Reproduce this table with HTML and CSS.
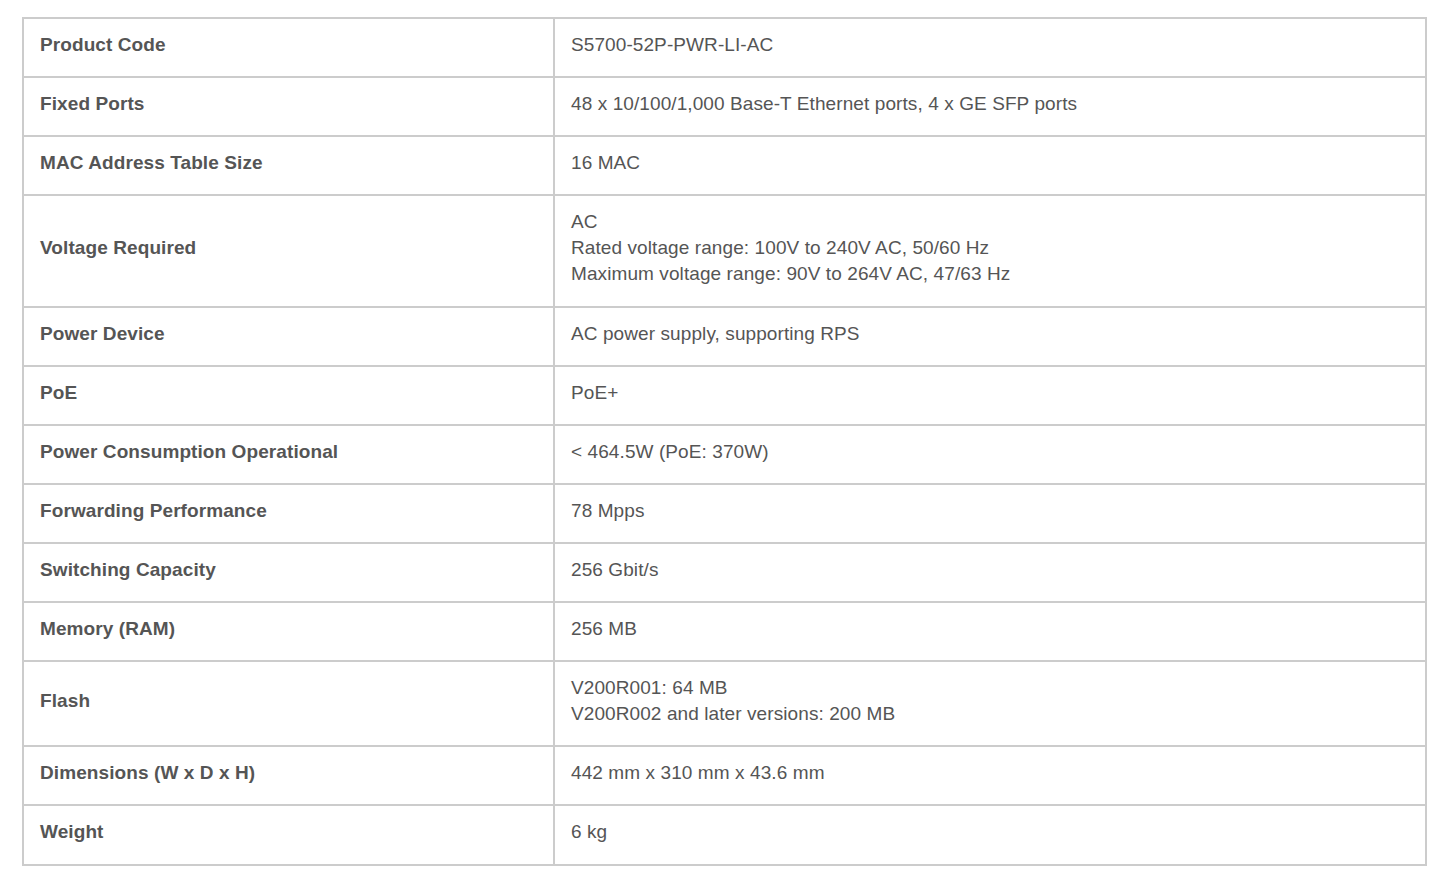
FILE: index.html
```html
<!DOCTYPE html>
<html lang="en">
<head>
<meta charset="utf-8">
<title>Specifications</title>
<link rel="stylesheet" href="styles.css">
</head>
<body>
<div class="page">
  <div class="spec">
    <div class="label">Product Code</div>
    <div class="value">S5700-52P-PWR-LI-AC</div>
    <div class="label">Fixed Ports</div>
    <div class="value">48 x 10/100/1,000 Base-T Ethernet ports, 4 x GE SFP ports</div>
    <div class="label">MAC Address Table Size</div>
    <div class="value">16 MAC</div>
    <div class="label">Voltage Required</div>
    <div class="value">AC<br>Rated voltage range: 100V to 240V AC, 50/60 Hz<br>Maximum voltage range: 90V to 264V AC, 47/63 Hz</div>
    <div class="label">Power Device</div>
    <div class="value">AC power supply, supporting RPS</div>
    <div class="label">PoE</div>
    <div class="value">PoE+</div>
    <div class="label">Power Consumption Operational</div>
    <div class="value">&lt; 464.5W (PoE: 370W)</div>
    <div class="label">Forwarding Performance</div>
    <div class="value">78 Mpps</div>
    <div class="label">Switching Capacity</div>
    <div class="value">256 Gbit/s</div>
    <div class="label">Memory (RAM)</div>
    <div class="value">256 MB</div>
    <div class="label">Flash</div>
    <div class="value">V200R001: 64 MB<br>V200R002 and later versions: 200 MB</div>
    <div class="label">Dimensions (W x D x H)</div>
    <div class="value">442 mm x 310 mm x 43.6 mm</div>
    <div class="label">Weight</div>
    <div class="value">6 kg</div>
  </div>
</div>
</body>
</html>
```

FILE: styles.css
```css
html, body {
  margin: 0;
  padding: 0;
  background: #ffffff;
}

.page {
  padding: 17px 0 0 22px;
}

.spec {
  box-sizing: border-box;
  width: 1405px;
  display: grid;
  grid-template-columns: 531px 1fr;
  border-top: 2px solid #cccccc;
  border-left: 2px solid #cccccc;
  font-family: "Liberation Sans", Arial, Helvetica, sans-serif;
  font-size: 19px;
  line-height: 26.1px;
  letter-spacing: 0.09px;
  color: #555555;
}

.label,
.value {
  box-sizing: border-box;
  border-right: 2px solid #cccccc;
  border-bottom: 2px solid #cccccc;
  padding: 13px 16px 18px 16px;
}

.label {
  font-weight: bold;
  display: flex;
  align-items: center;
}
```
